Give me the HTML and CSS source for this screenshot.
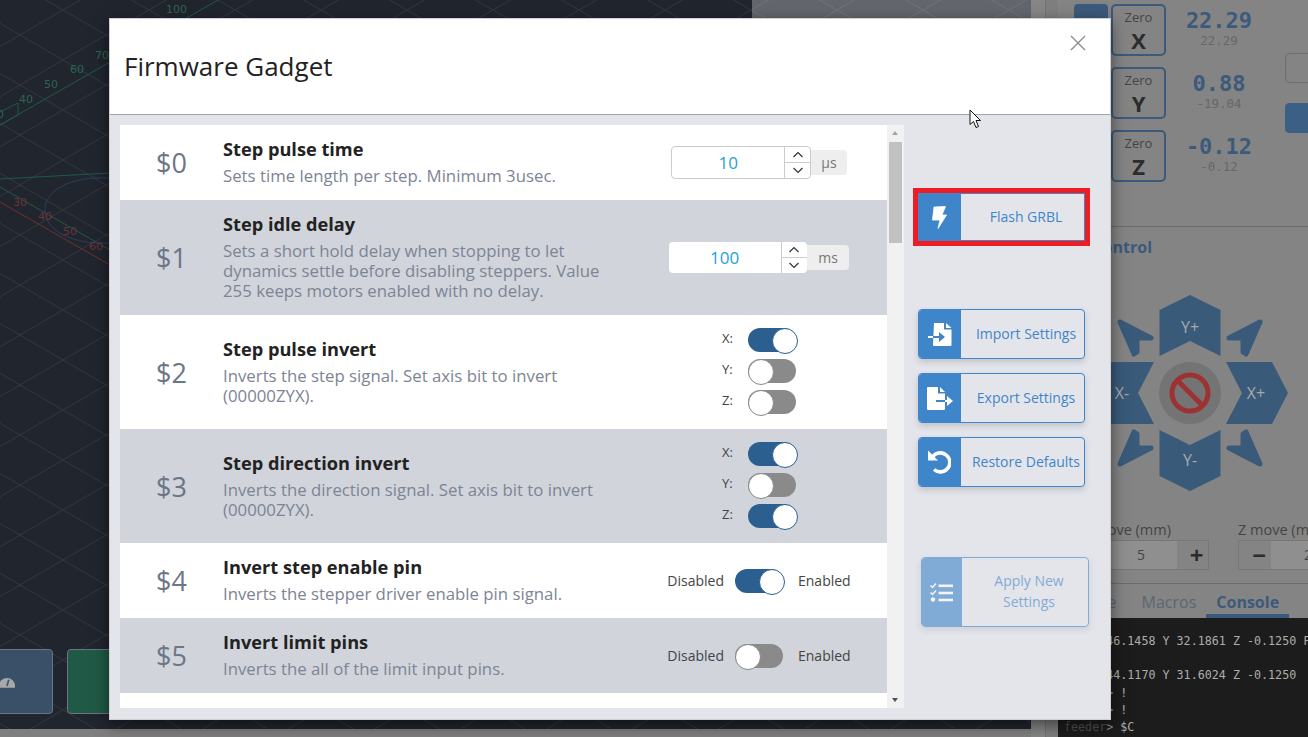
FILE: index.html
```html
<!DOCTYPE html>
<html lang="en">
<head>
  <meta charset="UTF-8" />
  <title>Firmware Gadget</title>
  <link rel="stylesheet" href="styles.css">
</head>
<body>
  <div class="app">
    <div class="stage">
      <div class="canvas">
        <svg class="grid" width="1031" height="729">
          <defs>
            <pattern id="iso" width="86" height="50" patternUnits="userSpaceOnUse" x="20" y="10">
              <path d="M0 25L43 0L86 25L43 50Z" fill="none" stroke="#32363f" stroke-width="1"/>
            </pattern>
          </defs>
          <rect width="1031" height="729" fill="url(#iso)"/>
          <line x1="0" y1="125" x2="218" y2="0" stroke="#1f5a4a"/>
          <line x1="0" y1="179" x2="110" y2="173" stroke="#1f5a4a"/>
          <line x1="0" y1="187" x2="110" y2="250" stroke="#1f5a4a"/>
          <line x1="0" y1="202" x2="110" y2="265" stroke="#73302f"/>
          <path d="M110 178C70 176 45 190 45 210C45 232 75 245 110 243" fill="none" stroke="#2c3f5c"/>
          <path d="M0 112L18 103V115L0 125" fill="none" stroke="#1f5a4a"/>
          <g class="grid-label grid-label-green">
            <text x="166" y="13">100</text>
            <text x="95" y="59">70</text>
            <text x="70" y="73">60</text>
            <text x="44" y="88">50</text>
            <text x="19" y="103">40</text>
            <text x="-3" y="118">0</text>
          </g>
          <g class="grid-label grid-label-red">
            <text x="13" y="206">30</text>
            <text x="38" y="220">40</text>
            <text x="63" y="235">50</text>
            <text x="89" y="250">60</text>
          </g>
        </svg>
        <div class="canvas-panel"></div>
        <div class="canvas-btn canvas-btn-blue">
          <svg width="16" height="13" viewBox="0 0 18 14"><path d="M0 12a9 9 0 0 1 18 0v2H0Z" fill="#a9a9a9"/><path d="M9 12L11 5" stroke="#3c5a7b" stroke-width="2"/></svg>
        </div>
        <div class="canvas-btn canvas-btn-green"></div>
      </div>
      <div class="stage-foot"></div>
    </div>

    <div class="gutter"></div>

    <div class="side">
      <div class="dro">
        <div class="dro-rows">
          <div class="dro-row">
            <div class="dro-lock"></div>
            <div class="zero"><span>Zero</span><b>X</b></div>
            <div class="dro-value"><b>22.29</b><span>22.29</span></div>
          </div>
          <div class="dro-row">
            <div class="dro-spacer"></div>
            <div class="zero"><span>Zero</span><b>Y</b></div>
            <div class="dro-value"><b>0.88</b><span>-19.04</span></div>
          </div>
          <div class="dro-row">
            <div class="dro-spacer"></div>
            <div class="zero"><span>Zero</span><b>Z</b></div>
            <div class="dro-value"><b>-0.12</b><span>-0.12</span></div>
          </div>
        </div>
        <div class="dro-actions">
          <div class="dro-action"></div>
          <div class="dro-action dro-action-blue"></div>
        </div>
      </div>

      <h2 class="side-title">Jog Control</h2>

      <svg class="jog" width="200" height="200" viewBox="-100 -100 200 200">
        <g fill="#3a5a7a">
          <path d="M0 -98L30.5 -83V-37L0 -52L-30.5 -37V-83Z"/>
          <path d="M0 98L30.5 83V37L0 52L-30.5 37V83Z"/>
          <path d="M36 -31H82L98 0L82 31H36L52 0Z"/>
          <path d="M-36 -31H-82L-98 0L-82 31H-36L-52 0Z"/>
          <g stroke="#3a5a7a" stroke-width="5" stroke-linejoin="round">
            <path d="M70 -71L39 -55H53V-41L56 -39Z"/>
            <path d="M-70 -71L-39 -55H-53V-41L-56 -39Z"/>
            <path d="M70 71L39 55H53V41L56 39Z"/>
            <path d="M-70 71L-39 55H-53V41L-56 39Z"/>
          </g>
        </g>
        <circle r="31" fill="#747474"/>
        <circle r="18" fill="none" stroke="#9c3232" stroke-width="5"/>
        <line x1="-13" y1="-13" x2="13" y2="13" stroke="#9c3232" stroke-width="5"/>
        <g class="jog-label">
          <text y="-60">Y+</text>
          <text y="73">Y-</text>
          <text x="66" y="6">X+</text>
          <text x="-68" y="6">X-</text>
        </g>
      </svg>

      <div class="moves">
        <div class="move move-xy">
          <label>XY move (mm)</label>
          <div class="move-input"><span class="move-btn">&minus;</span><span class="move-value">5</span><span class="move-btn">+</span></div>
        </div>
        <div class="move move-z">
          <label>Z move (mm)</label>
          <div class="move-input"><span class="move-btn">&minus;</span><span class="move-value">2</span><span class="move-btn">+</span></div>
        </div>
      </div>

      <div class="tabs">
        <span class="tab tab-first">Probe</span>
        <span class="tab">Macros</span>
        <span class="tab tab-active">Console</span>
      </div>

      <div class="console">
        <div class="console-line">G01 X 46.1458 Y 32.1861 Z -0.1250 F800</div>
        <div class="console-line">&nbsp;</div>
        <div class="console-line">G01 X 44.1170 Y 31.6024 Z -0.1250</div>
        <div class="console-line"><span class="prompt">feeder</span><span class="prompt-mark">&gt;</span> !</div>
        <div class="console-line"><span class="prompt">feeder</span><span class="prompt-mark">&gt;</span> !</div>
        <div class="console-line"><span class="prompt">feeder</span><span class="prompt-mark">&gt;</span> $C</div>
      </div>
    </div>
  </div>

  <div class="modal">
    <div class="modal-head">
      <h1>Firmware Gadget</h1>
      <svg class="modal-close" width="16" height="16" viewBox="0 0 16 16"><path d="M1 1L15 15M15 1L1 15" stroke="#8b8b8b" stroke-width="1.4"/></svg>
    </div>
    <div class="modal-body">
      <div class="settings">
        <div class="row">
          <div class="row-key">$0</div>
          <div class="row-text">
            <h3>Step pulse time</h3>
            <p>Sets time length per step. Minimum 3usec.</p>
          </div>
          <div class="row-control">
            <div class="spinner">
              <span class="spinner-value">10</span>
              <span class="spinner-arrows">
                <svg width="12" height="7" viewBox="0 0 12 7"><path d="M1.5 6L6 1.5L10.5 6" fill="none" stroke="#333" stroke-width="1.2"/></svg>
                <svg width="12" height="7" viewBox="0 0 12 7"><path d="M1.5 1L6 5.5L10.5 1" fill="none" stroke="#333" stroke-width="1.2"/></svg>
              </span>
            </div>
            <span class="unit">µs</span>
          </div>
        </div>

        <div class="row row-alt">
          <div class="row-key">$1</div>
          <div class="row-text">
            <h3>Step idle delay</h3>
            <p>Sets a short hold delay when stopping to let dynamics settle before disabling steppers. Value 255 keeps motors enabled with no delay.</p>
          </div>
          <div class="row-control">
            <div class="spinner spinner-plain">
              <span class="spinner-value">100</span>
              <span class="spinner-arrows">
                <svg width="12" height="7" viewBox="0 0 12 7"><path d="M1.5 6L6 1.5L10.5 6" fill="none" stroke="#333" stroke-width="1.2"/></svg>
                <svg width="12" height="7" viewBox="0 0 12 7"><path d="M1.5 1L6 5.5L10.5 1" fill="none" stroke="#333" stroke-width="1.2"/></svg>
              </span>
            </div>
            <span class="unit">ms</span>
          </div>
        </div>

        <div class="row row-tall">
          <div class="row-key">$2</div>
          <div class="row-text">
            <h3>Step pulse invert</h3>
            <p>Inverts the step signal. Set axis bit to invert (00000ZYX).</p>
          </div>
          <div class="row-control">
            <div class="axes">
              <span class="axis-label">X:</span><span class="toggle toggle-on"></span>
              <span class="axis-label">Y:</span><span class="toggle"></span>
              <span class="axis-label">Z:</span><span class="toggle"></span>
            </div>
          </div>
        </div>

        <div class="row row-tall row-alt">
          <div class="row-key">$3</div>
          <div class="row-text">
            <h3>Step direction invert</h3>
            <p>Inverts the direction signal. Set axis bit to invert (00000ZYX).</p>
          </div>
          <div class="row-control">
            <div class="axes">
              <span class="axis-label">X:</span><span class="toggle toggle-on"></span>
              <span class="axis-label">Y:</span><span class="toggle"></span>
              <span class="axis-label">Z:</span><span class="toggle toggle-on"></span>
            </div>
          </div>
        </div>

        <div class="row">
          <div class="row-key">$4</div>
          <div class="row-text">
            <h3>Invert step enable pin</h3>
            <p>Inverts the stepper driver enable pin signal.</p>
          </div>
          <div class="row-control row-switch">
            <span>Disabled</span><span class="toggle toggle-on"></span><span>Enabled</span>
          </div>
        </div>

        <div class="row row-alt">
          <div class="row-key">$5</div>
          <div class="row-text">
            <h3>Invert limit pins</h3>
            <p>Inverts the all of the limit input pins.</p>
          </div>
          <div class="row-control row-switch">
            <span>Disabled</span><span class="toggle"></span><span>Enabled</span>
          </div>
        </div>
      </div>

      <div class="scrollbar">
        <span class="scroll-up"></span>
        <span class="scroll-thumb"></span>
        <span class="scroll-down"></span>
      </div>

      <div class="actions">
        <a class="action action-flash">
          <span class="action-icon">
            <svg width="15" height="23" viewBox="0 0 15 23"><path d="M2 1L13.5 0.5L10 9H14.5L6 22.5L8 14H0.5Z" fill="#fff" stroke="#fff" stroke-width="0.8" stroke-linejoin="round"/></svg>
          </span>
          <span class="action-text">Flash GRBL</span>
        </a>
        <a class="action action-import">
          <span class="action-icon">
            <svg width="24" height="23" viewBox="0 0 24 23">
              <path d="M6 0H16V6.5H23.5V22a1 1 0 0 1-1 1H6a1 1 0 0 1-1-1Z" fill="#fff"/>
              <path d="M18 0L23.5 5H18Z" fill="#fff"/>
              <rect x="0" y="13" width="5" height="2" fill="#fff"/>
              <rect x="5" y="13" width="7" height="2" fill="#3f85c9"/>
              <path d="M11 9L17 14L11 19Z" fill="#3f85c9"/>
            </svg>
          </span>
          <span class="action-text">Import Settings</span>
        </a>
        <a class="action">
          <span class="action-icon">
            <svg width="26" height="23" viewBox="0 0 26 23">
              <path d="M1 0H11V6.5H18V22a1 1 0 0 1-1 1H1a1 1 0 0 1-1-1V1a1 1 0 0 1 1-1Z" fill="#fff"/>
              <path d="M13 0L18 5H13Z" fill="#fff"/>
              <rect x="9" y="13" width="9" height="2" fill="#3f85c9"/>
              <rect x="18" y="13" width="2" height="2" fill="#fff"/>
              <path d="M20 9L26 14L20 19Z" fill="#fff"/>
            </svg>
          </span>
          <span class="action-text">Export Settings</span>
        </a>
        <a class="action">
          <span class="action-icon">
            <svg width="23" height="24" viewBox="0 0 23 24">
              <path d="M4.5 7A9.5 9.5 0 1 1 6 19.5" fill="none" stroke="#fff" stroke-width="3.6"/>
              <path d="M0 0.5V10.5H10Z" fill="#fff"/>
            </svg>
          </span>
          <span class="action-text">Restore Defaults</span>
        </a>
        <a class="action action-apply">
          <span class="action-icon">
            <svg width="23" height="19" viewBox="0 0 23 19">
              <path d="M0.5 2.5L2.5 4.5L6 0.5M0.5 9.5L2.5 11.5L6 7.5" fill="none" stroke="#fff" stroke-width="1.5"/>
              <circle cx="3" cy="16.5" r="2.2" fill="#fff"/>
              <rect x="8.5" y="1.5" width="14.5" height="2.6" fill="#fff"/>
              <rect x="8.5" y="8.7" width="14.5" height="2.6" fill="#fff"/>
              <rect x="8.5" y="15.7" width="14.5" height="2.6" fill="#fff"/>
            </svg>
          </span>
          <span class="action-text">Apply New Settings</span>
        </a>
      </div>
    </div>
  </div>

  <svg class="cursor" width="13" height="20" viewBox="0 0 13 20">
    <path d="M1 1V15.5L4.5 12.5L7 18.5L9.5 17.5L7 11.5H11.5Z" fill="#fff" stroke="#111" stroke-width="1"/>
  </svg>
</body>
</html>
```

FILE: styles.css
```css
* {
  box-sizing: border-box;
}
html, body {
  margin: 0;
  height: 737px;
  overflow: hidden;
}
body {
  font-family: "Open Sans", sans-serif;
  background-color: #848484;
  color: #222;
  position: relative;
}
.app {
  display: grid;
  grid-template-columns: 1031px 27px 250px;
  height: 737px;
}

/* dimmed page behind the dialog */
.canvas {
  position: relative;
  height: 729px;
  background-color: #21252e;
}
.grid {
  display: block;
}
.grid-label {
  font-family: "DejaVu Sans", sans-serif;
  font-size: 11px;
}
.grid-label-green {
  fill: #2a6650;
}
.grid-label-red {
  fill: #6d3239;
}
.canvas-panel {
  position: absolute;
  left: 752px;
  top: 0;
  right: 0;
  height: 100px;
  background-color: rgba(255, 255, 255, 0.3);
}
.canvas-btn {
  position: absolute;
  top: 649px;
  height: 65px;
  border: 1px solid #6b7583;
  border-radius: 4px;
  display: flex;
  align-items: center;
  justify-content: flex-end;
}
.canvas-btn-blue {
  left: -20px;
  width: 73px;
  background-color: #3a5068;
  padding-right: 37px;
}
.canvas-btn-green {
  left: 67px;
  width: 80px;
  background-color: #205a46;
}
.stage-foot {
  height: 8px;
  background-color: #7f7f7f;
}
.gutter {
  background-color: #868686;
  box-shadow: inset -12px 0 0 #7f7f7f, inset -13px 0 0 #737373;
}

.side {
  background-color: #848484;
  display: flex;
  flex-direction: column;
  height: 737px;
  overflow: hidden;
}
.dro {
  display: flex;
  height: 227px;
  border-bottom: 1px solid #6c6c6c;
  padding: 4px 0 0 16px;
  flex: none;
}
.dro-rows {
  display: flex;
  flex-direction: column;
  gap: 11px;
}
.dro-row {
  display: flex;
  height: 52px;
  gap: 3px;
}
.dro-lock {
  width: 34px;
  height: 40px;
  background-color: #3c5a7b;
  border-radius: 4px;
}
.dro-spacer {
  width: 34px;
}
.zero {
  width: 55px;
  border: 2px solid #3c5a7b;
  border-radius: 5px;
  display: flex;
  flex-direction: column;
  align-items: center;
  padding-top: 2px;
  font-size: 13px;
  line-height: 18px;
  color: #444;
}
.zero b {
  font-size: 22px;
  line-height: 29px;
  color: #2c2c2c;
}
.dro-value {
  width: 100px;
  display: flex;
  flex-direction: column;
  align-items: center;
  font-family: "DejaVu Sans Mono", monospace;
  font-size: 12.5px;
  line-height: 14px;
  color: #676767;
  padding-top: 4px;
}
.dro-value b {
  font-size: 22px;
  line-height: 26px;
  color: #3c5a7b;
}
.dro-actions {
  margin-left: 16px;
  padding-top: 49px;
  display: flex;
  flex-direction: column;
  gap: 20px;
}
.dro-action {
  width: 40px;
  height: 30px;
  border: 1px solid #6e6e6e;
  border-radius: 4px;
}
.dro-action-blue {
  background-color: #3c5f85;
  border-color: #3c5f85;
}
.side-title {
  margin: 0;
  height: 41px;
  padding: 9px 0 0 6px;
  font-size: 16px;
  line-height: 22px;
  color: #3c5a7b;
  flex: none;
}
.jog {
  display: block;
  flex: none;
  margin: 25px 0 0 32px;
}
.jog-label {
  font-size: 16px;
  fill: #a9a9a9;
  text-anchor: middle;
}
.moves {
  display: flex;
  gap: 29px;
  margin-top: 27px;
  height: 64px;
  flex: none;
}
.move {
  flex: none;
  width: 151px;
  font-size: 14.5px;
  line-height: 20px;
  color: #444;
}
.move label {
  display: block;
}
.move-xy label {
  padding-left: 16px;
}
.move-input {
  display: grid;
  grid-template-columns: 46px 1fr 31px;
  height: 30px;
  border: 1px solid #777;
  align-items: center;
  text-align: center;
  font-size: 14px;
}
.move-z .move-input {
  grid-template-columns: 32px 74px 31px;
}
.move-value {
  background-color: #8f8f8f;
  height: 100%;
  line-height: 28px;
}
.move-btn {
  padding-left: 8px;
  font-size: 24px;
  font-weight: bold;
  line-height: 28px;
  color: #2c2c2c;
}
.tabs {
  display: flex;
  height: 35px;
  border-top: 1px solid #6c6c6c;
  padding-left: 4px;
  flex: none;
  font-size: 16px;
  line-height: 36px;
  color: #5c6670;
  margin-top: -1px;
}
.tab {
  padding: 0 10px;
}
.tab-first {
  margin-right: 5px;
}
.tab-active {
  font-weight: bold;
  color: #3c5a7b;
  border-bottom: 4px solid #3c5a7b;
}
.console {
  flex: 1;
  background-color: #1c1c1c;
  padding: 15px 0 0 6px;
  font-family: "DejaVu Sans Mono", monospace;
  font-size: 11.7px;
  line-height: 17.2px;
  color: #adadad;
  white-space: nowrap;
}
.prompt {
  color: #505050;
}
.prompt-mark {
  color: #8a8a8a;
}

/* dialog */
.modal {
  position: absolute;
  left: 109px;
  top: 18px;
  width: 1002px;
  height: 702px;
  background-color: #e4e5ea;
  border: 1px solid #cfcfcf;
  box-shadow: 0 5px 15px rgba(0, 0, 0, 0.5);
  display: flex;
  flex-direction: column;
}
.modal-head {
  position: relative;
  height: 96px;
  background-color: #fff;
  border-bottom: 1px solid #a0a4b0;
  padding: 29px 0 0 14px;
  flex: none;
}
.modal-head h1 {
  margin: 0;
  font-size: 26px;
  line-height: 36px;
  font-weight: 400;
  color: #222;
}
.modal-close {
  position: absolute;
  right: 24px;
  top: 16px;
}
.modal-body {
  display: flex;
  padding: 10px 0 0 10px;
}
.settings {
  width: 767px;
  height: 583px;
  background-color: #fff;
  overflow: hidden;
  flex: none;
}
.row {
  display: flex;
  align-items: center;
  height: 75px;
}
.row-alt {
  background-color: #d1d4db;
}
.row:nth-child(2) {
  height: 115px;
}
.row-tall {
  height: 114px;
}
.row-key {
  width: 103px;
  text-align: center;
  font-size: 27px;
  color: #6c7686;
  flex: none;
}
.row-text {
  width: 408px;
  flex: none;
  padding: 0 23px 2px 0;
}
.row-text h3 {
  margin: 0 0 5px;
  font-size: 18.2px;
  line-height: 24px;
  font-weight: 700;
  color: #222;
}
.row-text p {
  margin: 0;
  font-size: 16.8px;
  line-height: 20px;
  color: #7d8494;
}
.row-control {
  width: 256px;
  display: flex;
  justify-content: center;
  align-items: center;
  flex: none;
}
.spinner {
  display: flex;
  width: 140px;
  height: 33px;
  background-color: #fff;
  border: 1px solid #ccc;
  border-radius: 4px;
  flex: none;
}
.spinner-plain {
  width: 138px;
  height: 31px;
  border: none;
}
.spinner-value {
  flex: 1;
  text-align: center;
  font-size: 17px;
  line-height: 31px;
  color: #1da1d8;
}
.spinner-arrows {
  width: 26px;
  border-left: 1px solid #ccc;
  display: flex;
  flex-direction: column;
  align-items: center;
  justify-content: space-around;
  background: linear-gradient(#ccc, #ccc) center / 100% 1px no-repeat;
}
.spinner-arrows svg {
  display: block;
}
.unit {
  height: 25px;
  padding: 0 10px;
  background-color: #eee;
  border-radius: 0 4px 4px 0;
  font-size: 14px;
  line-height: 25px;
  color: #777;
}
.spinner-plain + .unit {
  padding: 0 11.5px;
}
.axes {
  display: grid;
  grid-template-columns: 26px 48px;
  row-gap: 7px;
  align-items: center;
  padding-bottom: 3px;
}
.axis-label {
  font-size: 13px;
  color: #444;
  margin-bottom: 4px;
}
.toggle {
  position: relative;
  display: block;
  width: 48px;
  height: 24px;
  border-radius: 12px;
  background-color: #8a8a8a;
  flex: none;
}
.toggle::after {
  content: "";
  position: absolute;
  left: 0;
  top: 0;
  width: 24px;
  height: 24px;
  border-radius: 50%;
  background-color: #fff;
  border: 1px solid #888;
}
.toggle-on {
  background-color: #2a5f90;
}
.toggle-on::after {
  left: 24px;
  border-color: #2a5f90;
}
.row-switch {
  gap: 11px;
  font-size: 14px;
  color: #444;
}
.row-switch span:last-child {
  margin-left: 4px;
}
.scrollbar {
  position: relative;
  width: 17px;
  height: 583px;
  background-color: #f1f1f1;
  flex: none;
}
.scroll-thumb {
  position: absolute;
  left: 2px;
  top: 17px;
  width: 13px;
  height: 101px;
  background-color: #c1c1c1;
}
.scroll-up,
.scroll-down {
  position: absolute;
  left: 5px;
  width: 0;
  height: 0;
  border-left: 3.5px solid transparent;
  border-right: 3.5px solid transparent;
}
.scroll-up {
  top: 6px;
  border-bottom: 4px solid #a3a3a3;
}
.scroll-down {
  bottom: 6px;
  border-top: 4px solid #505050;
}
.actions {
  display: flex;
  flex-direction: column;
  align-items: flex-start;
  padding: 68px 0 0 14px;
}
.action {
  display: flex;
  width: 167px;
  height: 50px;
  margin-bottom: 14px;
  border: 1px solid #3f85c9;
  border-radius: 4px;
  box-shadow: 0 3px 6px rgba(0, 0, 0, 0.15);
  overflow: hidden;
  color: #3f85c9;
  font-size: 14px;
  line-height: 20px;
}
.action-icon {
  width: 43px;
  margin: -1px 0 -1px -1px;
  background-color: #3f85c9;
  display: flex;
  align-items: center;
  justify-content: center;
  flex: none;
}
.action-text {
  flex: 1;
  display: flex;
  align-items: center;
  justify-content: center;
  text-align: center;
  padding-left: 7px;
  white-space: nowrap;
}
.action-flash {
  height: 48px;
  margin-bottom: 68px;
  border-radius: 0;
  outline: 5px solid #ee1c25;
  overflow: visible;
  box-shadow: none;
}
.action-apply {
  width: 168px;
  height: 70px;
  margin: 56px 0 0 3px;
  opacity: 0.6;
}
.action-apply .action-icon {
  width: 41px;
}
.action-apply .action-text {
  white-space: normal;
  padding: 0 14px 2px 22px;
  line-height: 21px;
}
.cursor {
  position: absolute;
  left: 969px;
  top: 109px;
}
```
